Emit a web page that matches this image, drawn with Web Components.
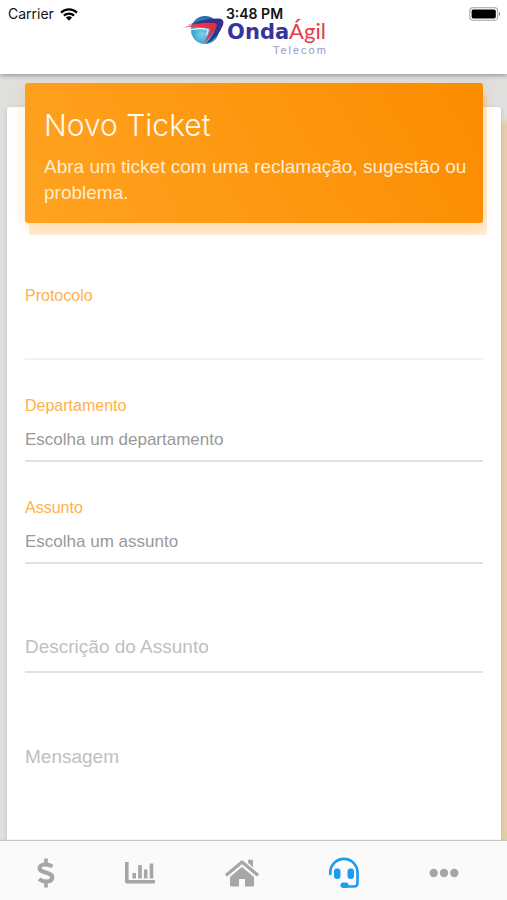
<!DOCTYPE html>
<html lang="pt-BR">
<head>
<meta charset="utf-8">
<meta name="viewport" content="width=device-width, initial-scale=1">
<title>Novo Ticket</title>
<style>
  html, body { margin: 0; height: 100%; }
  body { font-family: "Liberation Sans", Arial, sans-serif; background: #dfdfdd; }
</style>
</head>
<body>
<app-shell>
  <app-header slot="header">
    <status-bar slot="status" carrier="Carrier" time="3:48 PM"></status-bar>
    <brand-logo></brand-logo>
  </app-header>
  <form-card>
    <card-banner slot="banner">
      <span slot="title">Novo Ticket</span>
      Abra um ticket com uma reclamação, sugestão ou problema.
    </card-banner>
    <text-field label="Protocolo"></text-field>
    <select-field label="Departamento" prompt="Escolha um departamento"></select-field>
    <select-field label="Assunto" prompt="Escolha um assunto"></select-field>
    <line-field label="Descrição do Assunto"></line-field>
    <message-field label="Mensagem"></message-field>
  </form-card>
  <tab-bar slot="tabs"></tab-bar>
</app-shell>

<script>
const define = (name, html) => {
  const template = document.createElement('template');
  template.innerHTML = html;
  customElements.define(name, class extends HTMLElement {
    constructor() {
      super();
      this.attachShadow({ mode: 'open' }).append(template.content.cloneNode(true));
    }
    connectedCallback() {
      for (const node of this.shadowRoot.querySelectorAll('[data-text]'))
        node.textContent = this.getAttribute(node.dataset.text);
      for (const node of this.shadowRoot.querySelectorAll('[data-hint]')) {
        node.placeholder = this.getAttribute(node.dataset.hint);
        node.setAttribute('aria-label', node.placeholder);
      }
    }
  });
};

define('app-shell', `
  <style>
    :host { display: grid; grid-template-rows: auto 1fr auto; height: 100vh; overflow: hidden; }
    header, nav { z-index: 1; }
    main { min-height: 0; overflow: hidden; padding: 33px 6px 0 7px; }
  </style>
  <header><slot name="header"></slot></header>
  <main><slot></slot></main>
  <nav><slot name="tabs"></slot></nav>`);

define('app-header', `
  <style>
    :host { display: flex; justify-content: center; position: relative; background: #fff;
            padding: 16px 0 18px; box-shadow: 0 1px 5px rgba(0,0,0,.4); }
    .status { position: absolute; inset: 0 0 auto; }
  </style>
  <slot></slot>
  <div class="status"><slot name="status"></slot></div>`);

define('status-bar', `
  <style>
    :host { display: grid; grid-template-columns: 1fr auto 1fr; align-items: center;
            height: 28px; padding: 0 6px 0 8px; font: 14px/16px Inter, sans-serif; color: #111; }
    .left { display: flex; align-items: center; gap: 6px; }
    .time { font-weight: 600; }
    .right { justify-self: end; display: flex; }
  </style>
  <div class="left">
    <span data-text="carrier"></span>
    <svg width="18" height="13" viewBox="0 0 18 13" fill="none" stroke="#000" stroke-width="2.3">
      <path d="M1 4.6a11.5 11.5 0 0 1 16 0M3.9 7.7a7.4 7.4 0 0 1 10.2 0"/>
      <path d="M9 12.7 5.9 9.6a4.5 4.5 0 0 1 6.2 0z" fill="#000" stroke="none"/>
    </svg>
  </div>
  <span class="time" data-text="time"></span>
  <div class="right">
    <svg width="32" height="14" viewBox="0 0 32 14">
      <rect x=".7" y=".7" width="28" height="12.6" rx="3.5" fill="#fff" stroke="#b5b5b5" stroke-width="1.2"/>
      <rect x="2.6" y="2.6" width="24.2" height="8.8" rx="1.6"/>
      <path d="M30 4.8q2 2.2 0 4.4z" fill="#777"/>
    </svg>
  </div>`);

define('brand-logo', `
  <style>
    :host { display: flex; align-items: flex-start; }
    .words { display: grid; justify-items: end; padding-top: 2px; }
    .name { display: flex; align-items: baseline; font-size: 21px; line-height: 25px; }
    b { font-family: "DejaVu Sans", sans-serif; color: #37349a; }
    i { font-family: Lato, sans-serif; font-style: normal; font-size: 22px; color: #e8394c; }
    small { margin-right: -2px; font-size: 11px; line-height: 11px; letter-spacing: 2px; color: #9c97c6; }
  </style>
  <svg width="46" height="30" viewBox="0 0 46 30">
    <defs>
      <radialGradient id="globe" cx=".4" cy=".65" r=".7">
        <stop offset="0" stop-color="#7fd3ea"/><stop offset=".6" stop-color="#2f9ac6"/><stop offset="1" stop-color="#155f98"/>
      </radialGradient>
      <linearGradient id="swoosh"><stop offset="0" stop-color="#ef3a45" stop-opacity=".15"/><stop offset=".35" stop-color="#ef3a45"/><stop offset="1" stop-color="#e32b3d"/></linearGradient>
      <linearGradient id="tail"><stop offset="0" stop-color="#35308f" stop-opacity=".1"/><stop offset=".35" stop-color="#35308f"/></linearGradient>
    </defs>
    <circle cx="24" cy="14" r="14" fill="url(#globe)"/>
    <path d="M5 9.500Q22 2 38 2.500Q44 3 42 9Q37 22 25 28Q35 16 35.500 9Q28 7 5 9.500z" fill="url(#tail)"/>
    <path d="M0 12Q20 5.500 34 7Q37 8 35 11Q31 20 23 27Q28 18 29.500 13Q18 9.500 0 12z" fill="url(#swoosh)"/>
    <path d="M6 15Q17 11 27 13.500Q27.500 16 25 19" fill="none" stroke="#eef7fb" stroke-width="1.200"/>
  </svg>
  <div class="words">
    <div class="name"><b>Onda</b><i>Ágil</i></div>
    <small>Telecom</small>
  </div>`);

define('form-card', `
  <style>
    :host { display: flow-root; background: #fff; border-radius: 3px; padding: 0 18px;
            box-shadow: 10px 14px 4px rgba(255,152,0,.24), 0 1px 4px rgba(0,0,0,.15); }
    form { min-height: 800px; padding-top: 61px; margin: 0; }
  </style>
  <slot name="banner"></slot>
  <form><slot></slot></form>`);

define('card-banner', `
  <style>
    :host { display: block; margin-top: -24px; padding: 22px 12px 17px 19px;
            border-radius: 3px; color: #ffecd0; font-size: 19px; line-height: 26px;
            background: linear-gradient(60deg, #ffa321, #fb8c00);
            box-shadow: 4px 12px 1px rgba(255,152,0,.18), 0 4px 14px rgba(255,152,0,.2); }
    h1 { margin: 0 0 9px; font: 300 30px/40px Inter, "Liberation Sans", sans-serif; color: #fff8ec; }
    p { margin: 0; }
  </style>
  <h1><slot name="title"></slot></h1>
  <p><slot></slot></p>`);

define('text-field', `
  <style>
    :host { display: block; }
    label { display: block; font-size: 16px; line-height: 24px; color: #ffb14c; }
    input { display: block; box-sizing: border-box; width: 100%; height: 52px; padding: 0; border: 0;
            border-bottom: 2px solid #f2f2f2; background: none; font: 17px "Liberation Sans", sans-serif; outline: 0; }
  </style>
  <label for="field" data-text="label"></label>
  <input id="field" readonly>`);

define('select-field', `
  <style>
    :host { display: block; padding-top: 34px; }
    label { display: block; font-size: 16px; line-height: 24px; color: #ffb14c; }
    select { display: block; box-sizing: border-box; width: 100%; height: 44px; padding: 0; border: 0;
             border-bottom: 2px solid #e1e1e1; border-radius: 0; appearance: none; background: none;
             font: 17px "Liberation Sans", sans-serif; color: #999; outline: 0; }
  </style>
  <label for="field" data-text="label"></label>
  <select id="field"><option data-text="prompt"></option></select>`);

define('line-field', `
  <style>
    :host { display: block; padding-top: 59px; }
    input { display: block; box-sizing: border-box; width: 100%; height: 50px; padding: 0; border: 0;
            border-bottom: 2px solid #e1e1e1; background: none; font: 19px "Liberation Sans", sans-serif; outline: 0; }
    input::placeholder { color: #c0c0c0; opacity: 1; }
  </style>
  <input type="text" data-hint="label">`);

define('message-field', `
  <style>
    :host { display: block; padding-top: 71px; }
    textarea { display: block; width: 100%; height: 130px; padding: 0; border: 0; resize: none;
               background: none; font: 19px/26px "Liberation Sans", sans-serif; outline: 0; }
    textarea::placeholder { color: #c0c0c0; opacity: 1; }
  </style>
  <textarea data-hint="label"></textarea>`);

define('tab-bar', `
  <style>
    :host { display: flex; justify-content: space-between; height: 59px; padding: 5px 48px 0 36px;
            box-sizing: border-box; background: #fafafa; box-shadow: 0 -1px 1px #c4c4c4; color: #a6a6a6; }
    button { display: flex; align-items: center; border: 0; padding: 0; background: none; color: inherit; }
    .active { color: #1c9cf0; }
  </style>
  <button aria-label="Financeiro">
    <svg width="20" height="32" viewBox="0 0 20 32" fill="none" stroke="currentColor" stroke-width="4.200">
      <path d="M16.500 9.500Q13 7.500 9.500 7.500C2.500 7.500 2 13 7 14.600L12.500 16.500C18.500 18.500 17 24.500 10.500 24.500Q6 24.500 3 22.200"/>
      <path d="M10 1.500V7M10 25v5.500" stroke-width="3.600"/>
    </svg>
  </button>
  <button aria-label="Consumo">
    <svg width="30" height="24" viewBox="0 0 30 24" fill="none" stroke="currentColor" stroke-width="3.600">
      <path d="M1.800 1v19.700H30" stroke-linejoin="round"/>
      <path d="M9.200 12v5.500M15 4v13.500M20.700 8.500v9M26.500 2.500v15"/>
    </svg>
  </button>
  <button aria-label="Início">
    <svg width="34" height="28" viewBox="0 0 34 28" fill="currentColor">
      <path d="M23 3.500V1.500Q23 .8 23.800 .8h3.400q.8 0 .8.800v6.800z"/>
      <path d="M2 15.500 17 3l15 12.500" fill="none" stroke="currentColor" stroke-width="3.300" stroke-linecap="round" stroke-linejoin="round"/>
      <path d="M17 8 29 18v8q0 1.500-1.500 1.500H20V20h-6v7.500H6.500Q5 27.500 5 26v-8z"/>
    </svg>
  </button>
  <button class="active" aria-label="Suporte">
    <svg width="32" height="32" viewBox="0 0 32 32" fill="none" stroke="currentColor" stroke-width="2.600" stroke-linecap="round">
      <path d="M2.300 17v-1.500a13.500 13.500 0 0 1 27.200 0V26q0 3.500-3.500 3.500H17"/>
      <rect x="6" y="11.500" width="6.500" height="10.500" rx="3" fill="currentColor" stroke="none"/>
      <rect x="19.500" y="11.500" width="6.500" height="10.500" rx="3" fill="currentColor" stroke="none"/>
      <rect x="12.500" y="25.500" width="8" height="5.500" rx="2.700" fill="currentColor" stroke="none"/>
    </svg>
  </button>
  <button aria-label="Mais">
    <svg width="30" height="10" viewBox="0 0 30 10" fill="currentColor">
      <circle cx="4.700" cy="5" r="4.200"/><circle cx="15" cy="5" r="4.200"/><circle cx="25.300" cy="5" r="4.200"/>
    </svg>
  </button>`);
</script>
</body>
</html>
